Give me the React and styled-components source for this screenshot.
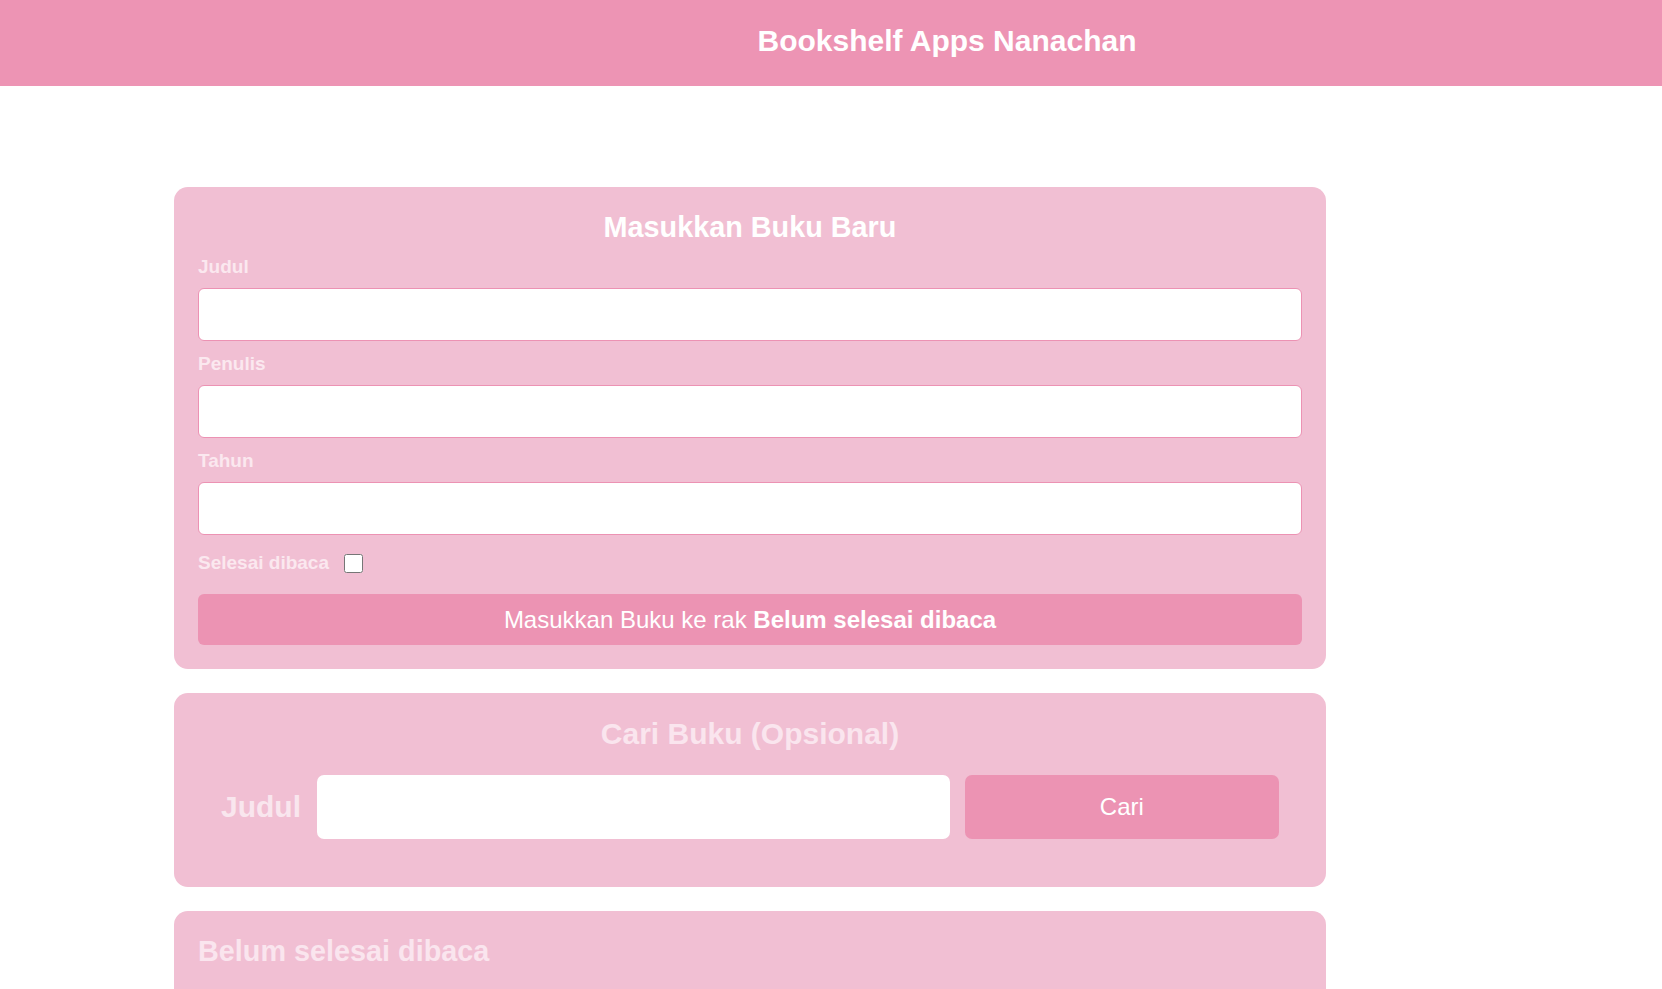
import React from "react";
import styled, { createGlobalStyle } from "styled-components";

const GlobalStyle = createGlobalStyle`
  body {
    margin: 0;
    background: #fff;
    font-family: "Liberation Sans", Arial, sans-serif;
  }
`;

const Header = styled.header`
  height: 86px;
  box-sizing: border-box;
  padding: 24px 0 0 232px;
  background-color: #ed94b4;
  text-align: center;
`;

const AppTitle = styled.h1`
  margin: 0;
  font-size: 30px;
  font-weight: 700;
  color: #fff;
`;

const Main = styled.main`
  width: 1152px;
  padding: 101px 0 40px 174px;
  display: flex;
  flex-direction: column;
  gap: 24px;
`;

const Card = styled.section`
  background-color: #f1bfd3;
  border-radius: 14px;
  padding: ${(props) => props.pad || "24px 24px 24px"};
  min-height: ${(props) => props.minHeight || "auto"};
`;

const CardTitle = styled.h2`
  margin: 0 0 ${(props) => props.gap || "12px"};
  font-size: ${(props) => props.size || "28.8px"};
  font-weight: 700;
  color: ${(props) => props.color || "#fff"};
  text-align: ${(props) => (props.left ? "left" : "center")};
`;

const Field = styled.div`
  display: flex;
  flex-direction: column;
  margin-bottom: ${(props) => (props.last ? "17px" : "12px")};
`;

const Label = styled.label`
  font-size: 19px;
  font-weight: 700;
  color: #fbe8ef;
  margin-bottom: 10px;
`;

const Input = styled.input`
  height: 53px;
  box-sizing: border-box;
  border: 1px solid #ec92b3;
  border-radius: 6px;
  background: #fff;
  padding: 0 12px;
  font-size: 18px;
  outline: none;
`;

const CheckRow = styled.div`
  display: flex;
  align-items: center;
  margin-bottom: 20px;
`;

const CheckLabel = styled.label`
  font-size: 19px;
  font-weight: 700;
  color: #fbe8ef;
`;

const Check = styled.input`
  width: 19px;
  height: 19px;
  margin: 0 0 0 15px;
`;

const SubmitButton = styled.button`
  width: 100%;
  height: 51px;
  border: none;
  border-radius: 6px;
  background-color: #ec93b3;
  color: #fff;
  font-family: "Liberation Sans", Arial, sans-serif;
  font-size: 24px;
  cursor: pointer;

  b {
    font-weight: 700;
  }
`;

const SearchForm = styled.form`
  display: flex;
  align-items: center;
  margin: 0 23px;
`;

const SearchLabel = styled.label`
  font-size: 30px;
  font-weight: 700;
  color: #f9e6ee;
  margin-right: 16px;
`;

const SearchInput = styled.input`
  flex: 2;
  height: 64px;
  box-sizing: border-box;
  border: none;
  border-radius: 7px;
  background: #fff;
  padding: 0 14px;
  font-size: 20px;
  outline: none;
  margin-right: 15px;
`;

const SearchButton = styled.button`
  flex: 1;
  height: 64px;
  border: none;
  border-radius: 7px;
  background-color: #ec93b3;
  color: #fff;
  font-family: "Liberation Sans", Arial, sans-serif;
  font-size: 24px;
  cursor: pointer;
`;

const App = () => {
  return (
    <>
      <GlobalStyle />
      <Header>
        <AppTitle>Bookshelf Apps Nanachan</AppTitle>
      </Header>
      <Main>
        <Card>
          <CardTitle>Masukkan Buku Baru</CardTitle>
          <Field>
            <Label htmlFor="inputBookTitle">Judul</Label>
            <Input id="inputBookTitle" type="text" />
          </Field>
          <Field>
            <Label htmlFor="inputBookAuthor">Penulis</Label>
            <Input id="inputBookAuthor" type="text" />
          </Field>
          <Field last>
            <Label htmlFor="inputBookYear">Tahun</Label>
            <Input id="inputBookYear" type="number" />
          </Field>
          <CheckRow>
            <CheckLabel htmlFor="inputBookIsComplete">Selesai dibaca</CheckLabel>
            <Check id="inputBookIsComplete" type="checkbox" />
          </CheckRow>
          <SubmitButton type="button">
            Masukkan Buku ke rak <b>Belum selesai dibaca</b>
          </SubmitButton>
        </Card>

        <Card pad="24px 24px 48px">
          <CardTitle size="30px" color="#fae5ee" gap="24px">
            Cari Buku (Opsional)
          </CardTitle>
          <SearchForm onSubmit={(e) => e.preventDefault()}>
            <SearchLabel htmlFor="searchBookTitle">Judul</SearchLabel>
            <SearchInput id="searchBookTitle" type="text" />
            <SearchButton type="submit">Cari</SearchButton>
          </SearchForm>
        </Card>

        <Card pad="24px 24px 24px" minHeight="200px">
          <CardTitle left color="#fae5ee">
            Belum selesai dibaca
          </CardTitle>
        </Card>
      </Main>
    </>
  );
};

export default App;
